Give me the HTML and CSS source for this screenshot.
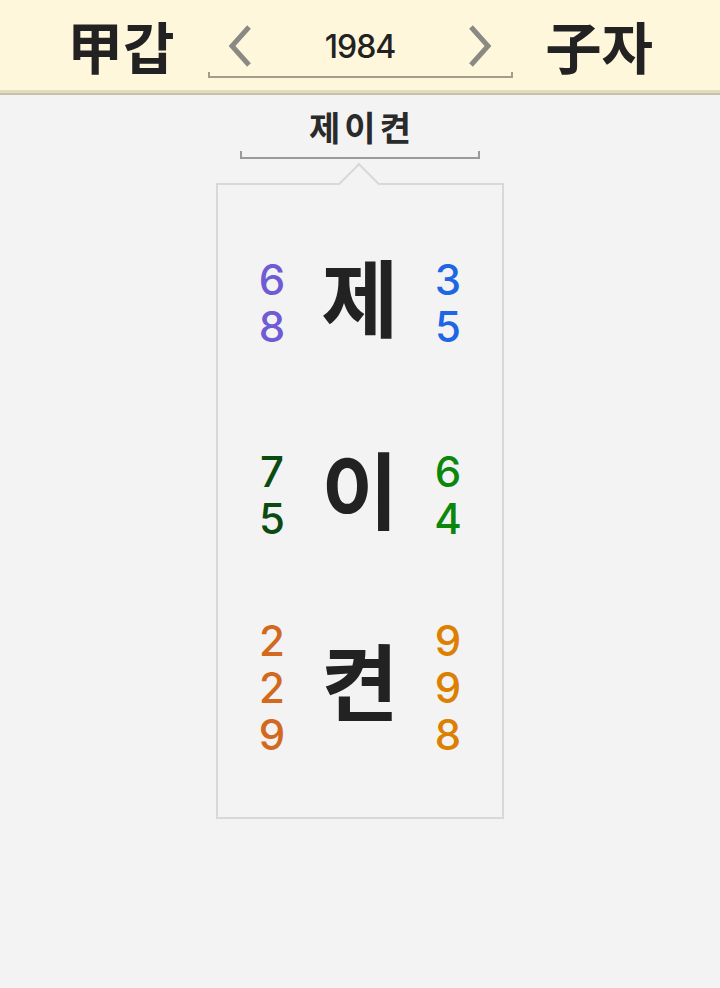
FILE: index.html
```html
<!DOCTYPE html>
<html lang="ko">
<head>
  <meta charset="UTF-8">
  <meta name="viewport" content="width=device-width, initial-scale=1.0">
  <title>이름 풀이</title>
  <link rel="stylesheet" href="styles.css">
</head>
<body>
  <header class="topbar">
    <div class="ganji">甲갑</div>
    <div class="year-box">
      <div class="year-row">
        <svg class="chev" viewBox="0 0 24 42" width="24" height="42"><polyline points="21,2 4,21 21,40" fill="none" stroke="#8a8a82" stroke-width="5"/></svg>
        <span class="year">1984</span>
        <svg class="chev" viewBox="0 0 24 42" width="24" height="42"><polyline points="3,2 20,21 3,40" fill="none" stroke="#8a8a82" stroke-width="5"/></svg>
      </div>
      <div class="bracket year-bracket"></div>
    </div>
    <div class="ganji">子자</div>
  </header>

  <main class="content">
    <div class="name">제이켠</div>
    <div class="bracket name-bracket"></div>

    <div class="card">
      <div class="row">
        <div class="nums purple"><span>6</span><span>8</span></div>
        <div class="syl">제</div>
        <div class="nums blue"><span>3</span><span>5</span></div>
      </div>
      <div class="row">
        <div class="nums dkgreen"><span>7</span><span>5</span></div>
        <div class="syl">이</div>
        <div class="nums green"><span>6</span><span>4</span></div>
      </div>
      <div class="row">
        <div class="nums orange"><span>2</span><span>2</span><span>9</span></div>
        <div class="syl">켠</div>
        <div class="nums amber"><span>9</span><span>9</span><span>8</span></div>
      </div>
    </div>
  </main>
</body>
</html>
```

FILE: styles.css
```css
body {
  margin: 0;
  background: #f3f3f3;
  font-family: "Noto Sans CJK KR", "Noto Sans", sans-serif;
  color: #222;
}
.topbar {
  height: 90px;
  background: #fff7dc;
  border-bottom: 3px solid #e3dbbf;
  box-shadow: 0 2px 0 #c8c1aa;
  display: flex;
  justify-content: center;
  align-items: center;
  gap: 33px;
}
.ganji {
  font-size: 56px;
  font-weight: 700;
  line-height: 60px;
  color: #222;
}
.year-box {
  width: 305px;
  display: flex;
  flex-direction: column;
  margin-top: 13px;
}
.year-row {
  display: flex;
  justify-content: space-between;
  align-items: center;
  padding: 0 20px;
}
.year {
  font-family: Inter, "Noto Sans", sans-serif;
  font-size: 32px;
  font-weight: 500;
  letter-spacing: -1px;
  color: #222;
}
.bracket {
  height: 6px;
  border: 2px solid #a39d8b;
  border-top: none;
  box-sizing: border-box;
}
.year-bracket {
  margin-top: 5px;
}
.content {
  display: flex;
  flex-direction: column;
  align-items: center;
  padding-top: 13px;
}
.name {
  font-size: 34px;
  font-weight: 700;
  line-height: 42px;
  letter-spacing: 4px;
  color: #2a2a2a;
  margin-left: 4px;
}
.name-bracket {
  width: 240px;
  height: 8px;
  margin-top: 3px;
  border-color: #9a9a9a;
}
.card {
  position: relative;
  width: 288px;
  height: 636px;
  box-sizing: border-box;
  margin-top: 24px;
  border: 2px solid #d8d8d8;
  padding-top: 22px;
}
.card::before {
  content: "";
  position: absolute;
  top: -16px;
  left: 50%;
  width: 30px;
  height: 30px;
  margin-left: -16px;
  background: #f3f3f3;
  border-top: 2px solid #d8d8d8;
  border-left: 2px solid #d8d8d8;
  box-sizing: border-box;
  transform: rotate(45deg);
}
.row {
  height: 192px;
  display: flex;
  justify-content: center;
  align-items: center;
  gap: 26px;
}
.syl {
  width: 84px;
  text-align: center;
  font-size: 84px;
  font-weight: 700;
  line-height: 96px;
  color: #222;
  margin-top: -16px;
}
.nums {
  width: 40px;
  display: flex;
  flex-direction: column;
  align-items: center;
  font-family: Inter, "Noto Sans", sans-serif;
  font-size: 42px;
  font-weight: 500;
  line-height: 47px;
}
.purple { color: #6f5bd3; }
.blue { color: #1f66e5; }
.dkgreen { color: #0d4a12; }
.green { color: #0b870b; }
.orange { color: #d2691e; }
.amber { color: #dd7f00; }
```
